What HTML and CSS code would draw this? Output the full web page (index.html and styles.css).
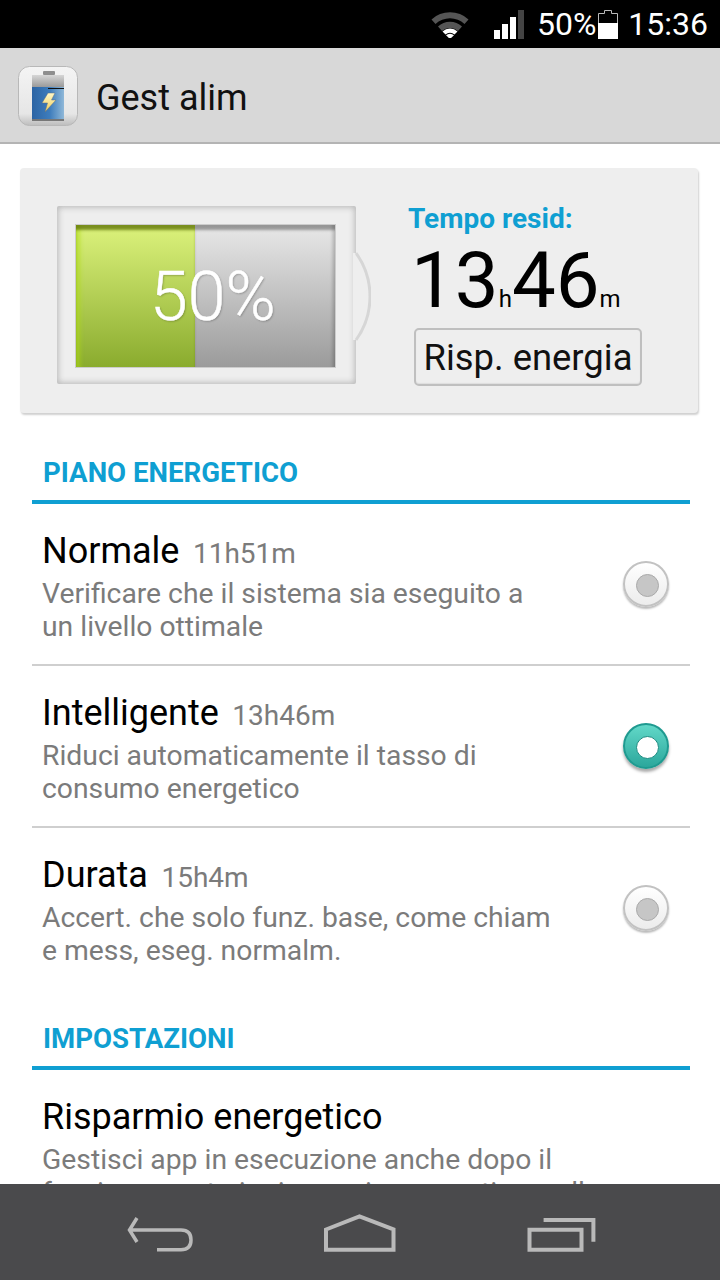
FILE: index.html
```html
<!DOCTYPE html>
<html lang="it">
<head>
<meta charset="utf-8">
<title>Gest alim</title>
<link rel="stylesheet" href="styles.css">
</head>
<body>
<div class="phone">
  <header class="status">
    <svg class="wifi" width="38" height="28" viewBox="0 0 38 28">
      <path d="M0.5 9.5 A27 27 0 0 1 37.5 9.5 L33.5 14 A21 21 0 0 0 4.5 14 Z" fill="#555"/>
      <path d="M7 16.5 A17.5 17.5 0 0 1 31 16.5 L27 21 A12 12 0 0 0 11 21 Z" fill="#555"/>
      <path d="M11.5 21.5 A11 11 0 0 1 26.5 21.5 L23.5 24.5 A7 7 0 0 0 14.5 24.5 Z" fill="#fff"/>
      <path d="M15 25.3 A6 6 0 0 1 23 25.3 L19 29 Z" fill="#fff"/>
    </svg>
    <div class="signal">
      <i class="bar bar1"></i><i class="bar bar2"></i><i class="bar bar3"></i><i class="bar bar4"></i>
    </div>
    <span class="pct">50%</span>
    <svg class="batt" width="20" height="29" viewBox="0 0 20 29">
      <path d="M6.5 .5 V3.5 H.5 V28.500 H19.500 V3.500 H13.500 V.5 Z" fill="none" stroke="#bbb"/>
      <rect x="0" y="13" width="20" height="16" fill="#fff"/>
    </svg>
    <span class="clock">15:36</span>
  </header>

  <div class="appbar">
    <svg class="appicon" width="60" height="60" viewBox="0 0 60 60">
      <defs>
        <linearGradient id="tile" x1="0" y1="0" x2="0" y2="1"><stop offset="0" stop-color="#f4f4f4"/><stop offset=".8" stop-color="#e6e6e6"/><stop offset="1" stop-color="#bdbdbd"/></linearGradient>
        <linearGradient id="cap" x1="0" y1="0" x2="0" y2="1"><stop offset="0" stop-color="#d6d6d6"/><stop offset="1" stop-color="#9a9a9a"/></linearGradient>
        <linearGradient id="body" x1="0" y1="0" x2="1" y2="0"><stop offset="0" stop-color="#2c64a4"/><stop offset=".55" stop-color="#3d7cbc"/><stop offset="1" stop-color="#8fb8d8"/></linearGradient>
        <linearGradient id="bolt" x1="0" y1="0" x2="0" y2="1"><stop offset="0" stop-color="#fff8c8"/><stop offset="1" stop-color="#f0cd5a"/></linearGradient>
      </defs>
      <rect x=".5" y=".5" width="59" height="59" rx="11" fill="url(#tile)" stroke="#b8b8b8"/>
      <rect x="25" y="5" width="12" height="4" rx="1" fill="#8e8e8e"/>
      <rect x="14" y="9" width="32" height="44" fill="url(#body)"/>
      <rect x="14" y="9" width="32" height="12" fill="url(#cap)"/>
      <rect x="14" y="53" width="32" height="2" fill="#777"/>
      <rect x="30" y="22" width="16" height="1" fill="#111"/>
      <path d="M30 27 H37 L33.500 34 H38 L27 46 L29.500 37 H24 Z" fill="url(#bolt)" stroke="#5d6f80" stroke-width=".5"/>
    </svg>
    <span class="apptitle">Gest alim</span>
  </div>

  <main class="content">
    <section class="card">
      <div class="battery">
        <div class="shell">
          <div class="cell">
            <div class="fill"></div>
            <div class="rest"></div>
          </div>
        </div>
        <svg class="nub" width="18" height="89" viewBox="0 0 18 89">
          <path d="M3 1 A74.6 74.6 0 0 1 3 88 H0 V1 Z" fill="#eee"/>
          <path d="M3 1 A74.6 74.6 0 0 1 3 88" fill="none" stroke="#d6d6d6" stroke-width="3"/>
        </svg>
        <span class="level">50%</span>
      </div>
      <div class="remain">
        <div class="remain-label">Tempo resid:</div>
        <div class="remain-time"><span class="big">13</span><span class="unit">h</span><span class="big">46</span><span class="unit">m</span></div>
        <div class="save-btn">Risp. energia</div>
      </div>
    </section>

    <h2 class="section first">PIANO ENERGETICO</h2>
    <div class="row">
      <div class="row-text">
        <div class="row-head"><span class="row-title">Normale</span><span class="row-time">11h51m</span></div>
        <div class="row-desc">Verificare che il sistema sia eseguito a<br>un livello ottimale</div>
      </div>
      <span class="radio"></span>
    </div>
    <div class="row">
      <div class="row-text">
        <div class="row-head"><span class="row-title">Intelligente</span><span class="row-time">13h46m</span></div>
        <div class="row-desc">Riduci automaticamente il tasso di<br>consumo energetico</div>
      </div>
      <span class="radio on"></span>
    </div>
    <div class="row last">
      <div class="row-text">
        <div class="row-head"><span class="row-title">Durata</span><span class="row-time">15h4m</span></div>
        <div class="row-desc">Accert. che solo funz. base, come chiam<br>e mess, eseg. normalm.</div>
      </div>
      <span class="radio"></span>
    </div>

    <h2 class="section">IMPOSTAZIONI</h2>
    <div class="row last">
      <div class="row-text">
        <div class="row-head"><span class="row-title">Risparmio energetico</span></div>
        <div class="row-desc">Gestisci app in esecuzione anche dopo il<br>funzionamento in risparmio energetico, nelle</div>
      </div>
    </div>
  </main>

  <nav class="navbar">
    <svg class="nav-back" width="72" height="40" viewBox="0 0 72 40"><path d="M12 4 L4.500 16 L12 28 M5 16 H56 Q66 16 66 26 Q66 35.700 56 35.700 H32" fill="none" stroke="#b9b9b9" stroke-width="3.500"/></svg>
    <svg class="nav-home" width="76" height="40" viewBox="0 0 76 40"><path d="M3 15.500 L36.500 2.500 L70.500 15.500 V35.700 H3 Z" fill="none" stroke="#b9b9b9" stroke-width="4"/></svg>
    <svg class="nav-recents" width="72" height="40" viewBox="0 0 72 40"><path d="M16.600 6 H66.400 V27.700 M2.500 15.700 H54.500 V35.700 H2.500 Z" fill="none" stroke="#b9b9b9" stroke-width="4"/></svg>
  </nav>
</div>
</body>
</html>
```

FILE: styles.css
```css
* { box-sizing: border-box; }
html, body { margin: 0; padding: 0; }
body { width: 720px; height: 1280px; overflow: hidden; background: #fff; font-family: Roboto, "Liberation Sans", sans-serif; }
.phone { width: 720px; height: 1280px; display: flex; flex-direction: column; }

.status { height: 48px; flex: none; background: #000; color: #fff; display: flex; align-items: center; padding-right: 12px; font-size: 32px; }
.wifi { margin-left: 431px; }
.signal { display: flex; align-items: flex-end; gap: 2px; margin-left: 25px; height: 29px; }
.bar { display: block; width: 6px; background: #fff; }
.bar1 { height: 9px; }
.bar2 { height: 15px; }
.bar3 { height: 22px; }
.bar4 { height: 29px; background: #444; }
.pct { margin-left: 13px; }
.batt { margin-left: 2px; }
.clock { margin-left: auto; }

.appbar { height: 96px; flex: none; background: #d8d8d8; border-bottom: 2px solid #b4b4b4; display: flex; align-items: center; padding: 2px 0 0 18px; }
.apptitle { margin: 4px 0 0 18px; font-size: 36px; color: #111; }

.content { flex: 1; min-height: 0; overflow: hidden; padding-top: 24px; }

.card { margin: 0 22px 0 20px; height: 245px; background: #eee; border-radius: 4px; box-shadow: 1px 2px 2px #d0d0d0; display: flex; padding: 38px 0 0 37px; }
.battery { position: relative; width: 314px; height: 178px; flex: none; }
.shell { width: 299px; height: 178px; background: #eee; border-radius: 2px; box-shadow: inset 0 0 6px 1px #b4b4b4; padding: 19px 21px 17px 19px; }
.cell { height: 142px; display: flex; box-shadow: 0 0 0 1px #ccc; }
.fill { width: 119px; background: linear-gradient(#dcf27c, #8aab2e); box-shadow: inset 0 6px 3px -1px rgba(90,110,0,.75), inset 7px 0 4px -3px rgba(175,220,20,.6); }
.rest { flex: 1; background: linear-gradient(#e8e8e8, #9b9b9b); box-shadow: inset 0 6px 3px -1px rgba(0,0,0,.35), inset -5px 0 3px -2px rgba(0,0,0,.15); }
.nub { position: absolute; left: 296px; top: 46px; }
.level { position: absolute; left: 93px; top: 54px; font-size: 68px; line-height: 75px; font-weight: 300; color: #fff; -webkit-text-stroke: .5px #fff; text-shadow: 1px 1px 2px rgba(0,0,0,.25); }

.remain { margin-left: 37px; }
.remain-label { font-size: 28px; line-height: 30px; font-weight: 700; color: #0f9fd2; margin-top: -2px; }
.remain-time { display: flex; align-items: baseline; color: #000; margin: 10px 0 0 3px; height: 74px; }
.big { font-size: 78px; line-height: 74px; }
.unit { font-size: 24px; }
.save-btn { margin: 10px 0 0 6px; width: 228px; height: 58px; border: 2px solid #bfbfbf; border-radius: 5px; font-size: 36.400px; line-height: 56px; text-align: center; white-space: nowrap; color: #111; box-shadow: inset 0 -1px 1px #ddd; }

.section { margin: 31px 30px 0 32px; height: 51px; border-bottom: 4px solid #0f9fd2; padding: 2px 0 0 11px; font-size: 27.600px; line-height: 36px; font-weight: 700; color: #0f9fd2; }
.first { margin-top: 40px; }
.row { margin: 0 30px 0 32px; height: 162px; border-bottom: 2px solid #cfcfcf; display: flex; align-items: flex-start; padding: 26px 21px 0 10px; }
.row.last { border-bottom: 0; height: 160px; }
.row-text { flex: 1; white-space: nowrap; }
.row-head { display: flex; align-items: baseline; height: 42px; }
.row-title { font-size: 36px; line-height: 42px; color: #000; }
.row-time { margin-left: 13.500px; font-size: 28px; color: #7b7b7b; }
.row-desc { font-size: 28.300px; line-height: 33px; color: #7b7b7b; margin-top: 5px; }

.radio { position: relative; display: block; flex: none; width: 46px; height: 46px; margin-top: 31px; border-radius: 50%; border: 2px solid #c2c2c2; background: linear-gradient(#fff, #ececec); box-shadow: 0 2px 2px #bbb; }
.radio::after { content: ""; position: absolute; left: 10.500px; top: 10.500px; width: 21px; height: 21px; border-radius: 50%; background: #c6c6c6; border: 1px solid #aaa; }
.radio.on { border-color: #1f9a90; background: linear-gradient(#62d8c8, #2ba79c); box-shadow: 0 3px 3px #aaa; }
.radio.on::after { background: #fff; border: 1px solid #1b8b81; }

.navbar { height: 96px; flex: none; background: #4a4a4c; display: flex; align-items: flex-start; padding: 30px 0 0 125px; }
.nav-home { margin-left: 126px; }
.nav-recents { margin-left: 128px; }
```
